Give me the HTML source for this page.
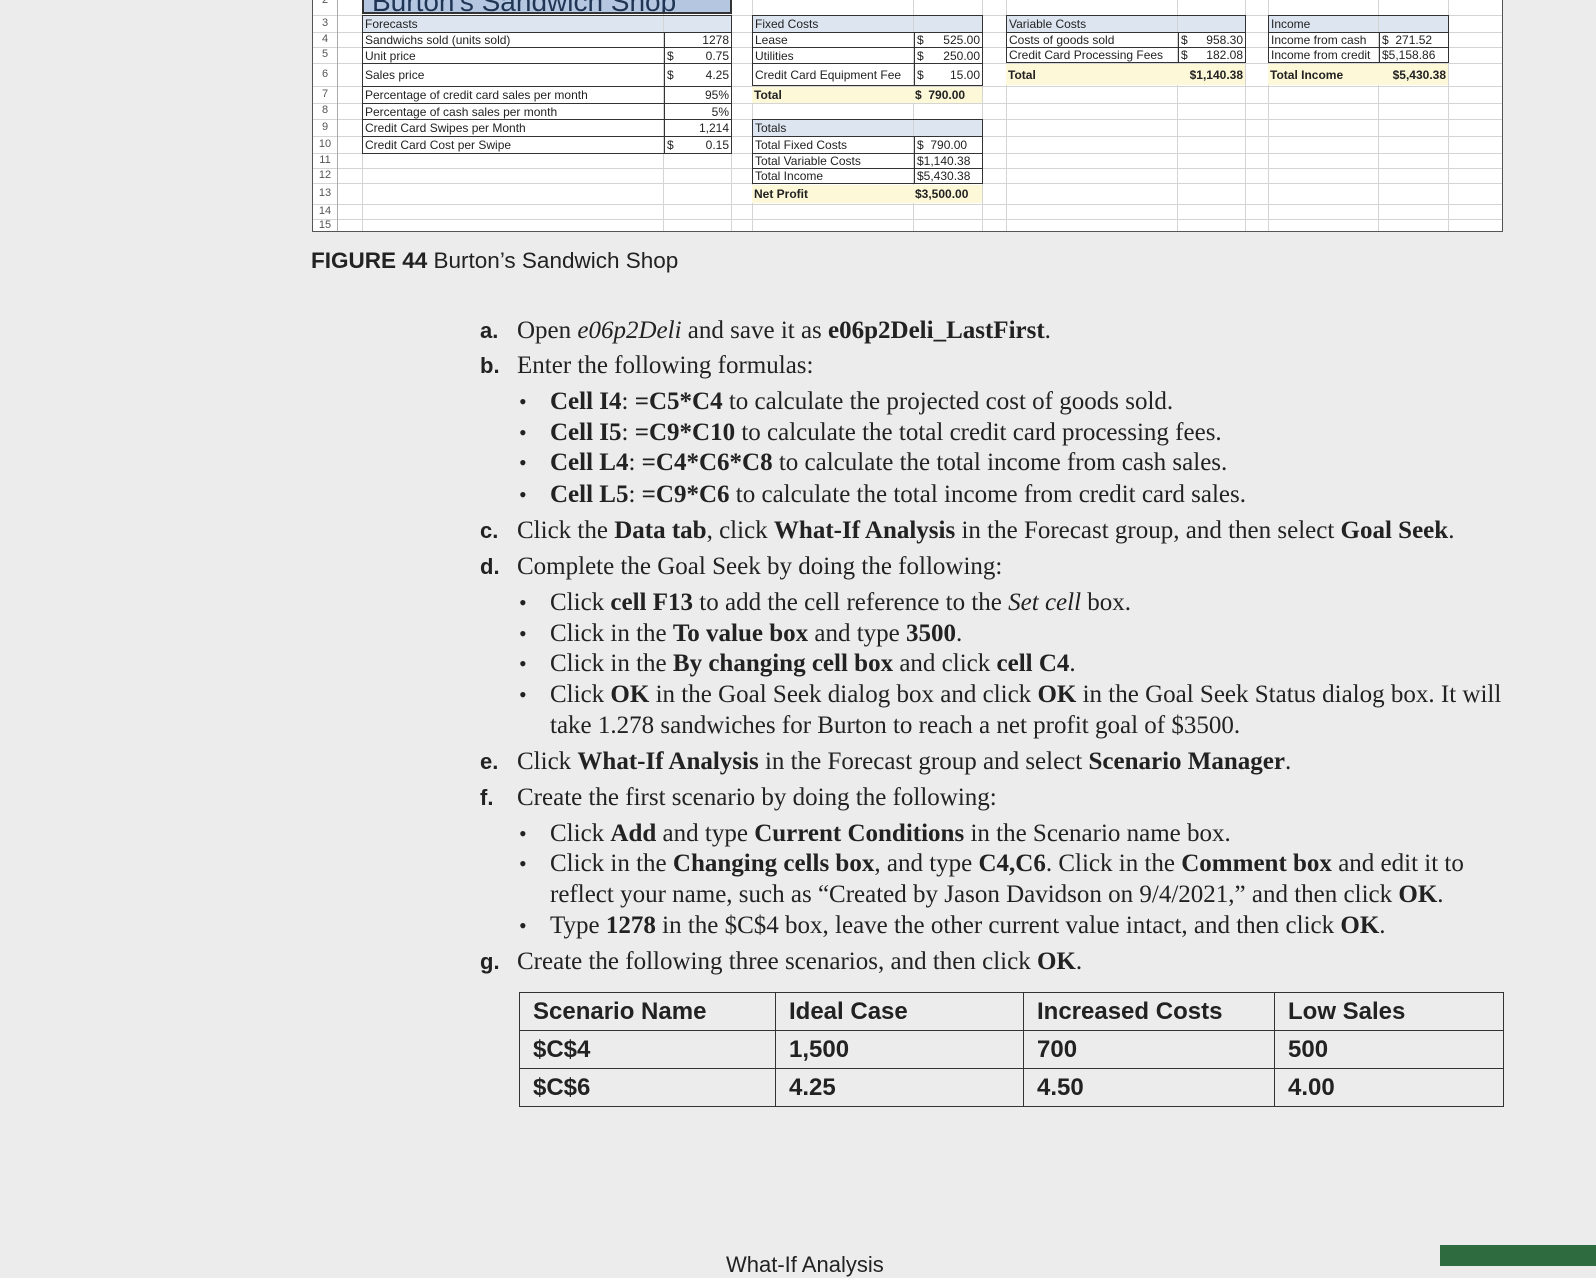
<!DOCTYPE html>
<html><head><meta charset="utf-8"><style>
body{margin:0;width:1596px;height:1266px;background:#ececec;position:relative;overflow:hidden;font-family:"Liberation Serif",serif;}
.a{position:absolute;white-space:nowrap}
.ss{position:absolute;left:312px;top:0;width:1191px;height:232px;background:#fff;border:1px solid #555;border-top:none;box-sizing:border-box;overflow:hidden}
.hl{position:absolute;left:0;right:0;height:1px;background:#d4d4d4}
.vl{position:absolute;top:0;bottom:0;width:1px;background:#d4d4d4}
.c{position:absolute;font-family:"Liberation Sans",sans-serif;font-size:12px;color:#222;white-space:nowrap;overflow:hidden;box-sizing:border-box;padding:0 2px;display:flex;align-items:center}
.r{justify-content:flex-end}
.b{font-weight:bold}
.hd{background:#dde5f0}
.y{background:#fdf8d8}
.bx{position:absolute;border:1.5px solid #333;box-sizing:border-box}
.bt{border-top:1px solid #333}
.rn{position:absolute;left:0;width:24px;font-family:"Liberation Sans",sans-serif;font-size:11px;color:#555;text-align:center}
.L{position:absolute;font-size:25px;color:#222;white-space:nowrap;line-height:30px}
.lt{position:absolute;left:480px;font-family:"Liberation Sans",sans-serif;font-weight:bold;font-size:22px;color:#222;line-height:30px}
.bu{position:absolute;left:519px;font-size:22px;line-height:30px;color:#222}
table.t{position:absolute;left:519px;top:992px;width:985px;border-collapse:collapse;font-family:"Liberation Sans",sans-serif;font-weight:bold;font-size:24px;color:#222}
table.t td{border:1.5px solid #333;height:38px;padding:0 13px;box-sizing:border-box}
</style></head><body>

<div class="ss">
<div class="hl" style="top:15px"></div><div class="hl" style="top:32px"></div><div class="hl" style="top:47px"></div><div class="hl" style="top:63px"></div><div class="hl" style="top:86px"></div><div class="hl" style="top:103px"></div><div class="hl" style="top:119px"></div><div class="hl" style="top:136px"></div><div class="hl" style="top:153px"></div><div class="hl" style="top:168px"></div><div class="hl" style="top:183px"></div><div class="hl" style="top:204px"></div><div class="hl" style="top:219px"></div>
<div class="vl" style="left:24px;background:#aaa"></div><div class="vl" style="left:49px"></div><div class="vl" style="left:350px"></div><div class="vl" style="left:418px"></div><div class="vl" style="left:439px"></div><div class="vl" style="left:600px"></div><div class="vl" style="left:669px"></div><div class="vl" style="left:693px"></div><div class="vl" style="left:864px"></div><div class="vl" style="left:932px"></div><div class="vl" style="left:955px"></div><div class="vl" style="left:1065px"></div><div class="vl" style="left:1135px"></div>
<div class="rn" style="top:-6px">2</div><div class="rn" style="top:17px">3</div><div class="rn" style="top:33px">4</div><div class="rn" style="top:48px">5</div><div class="rn" style="top:68px">6</div><div class="rn" style="top:88px">7</div><div class="rn" style="top:104px">8</div><div class="rn" style="top:121px">9</div><div class="rn" style="top:138px">10</div><div class="rn" style="top:154px">11</div><div class="rn" style="top:169px">12</div><div class="rn" style="top:187px">13</div><div class="rn" style="top:205px">14</div><div class="rn" style="top:219px">15</div>
<div class="c" style="left:49px;top:-14px;width:370px;height:28px;background:#b4c6e0;border:2px solid #333;font-size:28px;color:#1f3553;padding-left:8px;align-items:flex-end"><span style="margin-bottom:-4px;line-height:28px">Burton's Sandwich Shop</span></div>
<div class="bx" style="left:49px;top:15px;width:370px;height:139px"></div>
<div class="c hd" style="left:50px;top:16px;width:300px;height:16px">Forecasts</div><div class="c hd" style="left:351px;top:16px;width:67px;height:16px"></div>
<div class="c bt" style="left:50px;top:32px;width:301px;height:15px">Sandwichs sold (units sold)</div><div class="c r bt" style="left:351px;top:32px;width:67px;height:15px;border-left:1px solid #333">1278</div>
<div class="c bt" style="left:50px;top:47px;width:301px;height:16px">Unit price</div><div class="c bt" style="left:351px;top:47px;width:67px;height:16px;border-left:1px solid #333;justify-content:space-between"><span>$</span><span>0.75</span></div>
<div class="c bt" style="left:50px;top:63px;width:301px;height:23px">Sales price</div><div class="c bt" style="left:351px;top:63px;width:67px;height:23px;border-left:1px solid #333;justify-content:space-between"><span>$</span><span>4.25</span></div>
<div class="c bt" style="left:50px;top:86px;width:301px;height:17px">Percentage of credit card sales per month</div><div class="c r bt" style="left:351px;top:86px;width:67px;height:17px;border-left:1px solid #333">95%</div>
<div class="c bt" style="left:50px;top:103px;width:301px;height:16px">Percentage of cash sales per month</div><div class="c r bt" style="left:351px;top:103px;width:67px;height:16px;border-left:1px solid #333">5%</div>
<div class="c bt" style="left:50px;top:119px;width:301px;height:17px">Credit Card Swipes per Month</div><div class="c r bt" style="left:351px;top:119px;width:67px;height:17px;border-left:1px solid #333">1,214</div>
<div class="c bt" style="left:50px;top:136px;width:301px;height:17px">Credit Card Cost per Swipe</div><div class="c bt" style="left:351px;top:136px;width:67px;height:17px;border-left:1px solid #333;justify-content:space-between"><span>$</span><span>0.15</span></div>
<div class="bx" style="left:439px;top:15px;width:231px;height:71px"></div>
<div class="c hd" style="left:440px;top:16px;width:160px;height:16px">Fixed Costs</div><div class="c hd" style="left:601px;top:16px;width:68px;height:16px"></div>
<div class="c bt" style="left:440px;top:32px;width:161px;height:15px">Lease</div><div class="c bt" style="left:601px;top:32px;width:68px;height:15px;border-left:1px solid #333;justify-content:space-between"><span>$</span><span>525.00</span></div>
<div class="c bt" style="left:440px;top:47px;width:161px;height:16px">Utilities</div><div class="c bt" style="left:601px;top:47px;width:68px;height:16px;border-left:1px solid #333;justify-content:space-between"><span>$</span><span>250.00</span></div>
<div class="c bt" style="left:440px;top:63px;width:161px;height:23px">Credit Card Equipment Fee</div><div class="c bt" style="left:601px;top:63px;width:68px;height:23px;border-left:1px solid #333;justify-content:space-between"><span>$</span><span>15.00</span></div>
<div class="c y b" style="left:439px;top:87px;width:161px;height:16px">Total</div><div class="c y b" style="left:600px;top:87px;width:69px;height:16px">$&nbsp; 790.00</div>
<div class="bx" style="left:439px;top:119px;width:231px;height:65px"></div>
<div class="c hd" style="left:440px;top:120px;width:160px;height:16px">Totals</div><div class="c hd" style="left:601px;top:120px;width:68px;height:16px"></div>
<div class="c bt" style="left:440px;top:136px;width:161px;height:17px">Total Fixed Costs</div><div class="c bt" style="left:601px;top:136px;width:68px;height:17px;border-left:1px solid #333">$&nbsp; 790.00</div>
<div class="c bt" style="left:440px;top:153px;width:161px;height:15px">Total Variable Costs</div><div class="c bt" style="left:601px;top:153px;width:68px;height:15px;border-left:1px solid #333">$1,140.38</div>
<div class="c bt" style="left:440px;top:168px;width:161px;height:15px">Total Income</div><div class="c bt" style="left:601px;top:168px;width:68px;height:15px;border-left:1px solid #333">$5,430.38</div>
<div class="c y b" style="left:439px;top:185px;width:161px;height:18px">Net Profit</div><div class="c y b" style="left:600px;top:185px;width:69px;height:18px">$3,500.00</div>
<div class="bx" style="left:693px;top:15px;width:240px;height:48px"></div>
<div class="c hd" style="left:694px;top:16px;width:170px;height:16px">Variable Costs</div><div class="c hd" style="left:865px;top:16px;width:67px;height:16px"></div>
<div class="c bt" style="left:694px;top:32px;width:171px;height:15px">Costs of goods sold</div><div class="c bt" style="left:865px;top:32px;width:67px;height:15px;border-left:1px solid #333;justify-content:space-between"><span>$</span><span>958.30</span></div>
<div class="c bt" style="left:694px;top:47px;width:171px;height:15px">Credit Card Processing Fees</div><div class="c bt" style="left:865px;top:47px;width:67px;height:15px;border-left:1px solid #333;justify-content:space-between"><span>$</span><span>182.08</span></div>
<div class="c y b" style="left:693px;top:64px;width:171px;height:21px">Total</div><div class="c y b r" style="left:864px;top:64px;width:68px;height:21px">$1,140.38</div>
<div class="bx" style="left:955px;top:15px;width:181px;height:48px"></div>
<div class="c hd" style="left:956px;top:16px;width:109px;height:16px">Income</div><div class="c hd" style="left:1066px;top:16px;width:69px;height:16px"></div>
<div class="c bt" style="left:956px;top:32px;width:110px;height:15px">Income from cash</div><div class="c bt" style="left:1066px;top:32px;width:69px;height:15px;border-left:1px solid #333">$&nbsp; 271.52</div>
<div class="c bt" style="left:956px;top:47px;width:110px;height:15px">Income from credit</div><div class="c bt" style="left:1066px;top:47px;width:69px;height:15px;border-left:1px solid #333">$5,158.86</div>
<div class="c y b" style="left:955px;top:64px;width:111px;height:21px">Total Income</div><div class="c y b r" style="left:1066px;top:64px;width:69px;height:21px">$5,430.38</div>
</div>

<div class="a" style="left:311px;top:248px;font-family:'Liberation Sans',sans-serif;font-size:22.5px;color:#222"><b>FIGURE 44</b> Burton’s Sandwich Shop</div>

<div class="lt" style="top:316px">a.</div><div class="L" style="left:517px;top:316px">Open <i>e06p2Deli</i> and save it as <b>e06p2Deli_LastFirst</b>.</div>
<div class="lt" style="top:351px">b.</div><div class="L" style="left:517px;top:351px">Enter the following formulas:</div>
<div class="bu" style="top:387px">•</div><div class="L" style="left:550px;top:387px"><b>Cell I4</b>: <b>=C5*C4</b> to calculate the projected cost of goods sold.</div>
<div class="bu" style="top:418px">•</div><div class="L" style="left:550px;top:418px"><b>Cell I5</b>: <b>=C9*C10</b> to calculate the total credit card processing fees.</div>
<div class="bu" style="top:448px">•</div><div class="L" style="left:550px;top:448px"><b>Cell L4</b>: <b>=C4*C6*C8</b> to calculate the total income from cash sales.</div>
<div class="bu" style="top:480px">•</div><div class="L" style="left:550px;top:480px"><b>Cell L5</b>: <b>=C9*C6</b> to calculate the total income from credit card sales.</div>
<div class="lt" style="top:516px">c.</div><div class="L" style="left:517px;top:516px">Click the <b>Data tab</b>, click <b>What-If Analysis</b> in the Forecast group, and then select <b>Goal Seek</b>.</div>
<div class="lt" style="top:552px">d.</div><div class="L" style="left:517px;top:552px">Complete the Goal Seek by doing the following:</div>
<div class="bu" style="top:588px">•</div><div class="L" style="left:550px;top:588px">Click <b>cell F13</b> to add the cell reference to the <i>Set cell</i> box.</div>
<div class="bu" style="top:619px">•</div><div class="L" style="left:550px;top:619px">Click in the <b>To value box</b> and type <b>3500</b>.</div>
<div class="bu" style="top:649px">•</div><div class="L" style="left:550px;top:649px">Click in the <b>By changing cell box</b> and click <b>cell C4</b>.</div>
<div class="bu" style="top:680px">•</div><div class="L" style="left:550px;top:680px">Click <b>OK</b> in the Goal Seek dialog box and click <b>OK</b> in the Goal Seek Status dialog box. It will</div>
<div class="L" style="left:550px;top:711px">take 1.278 sandwiches for Burton to reach a net profit goal of $3500.</div>
<div class="lt" style="top:747px">e.</div><div class="L" style="left:517px;top:747px">Click <b>What-If Analysis</b> in the Forecast group and select <b>Scenario Manager</b>.</div>
<div class="lt" style="top:783px">f.</div><div class="L" style="left:517px;top:783px">Create the first scenario by doing the following:</div>
<div class="bu" style="top:819px">•</div><div class="L" style="left:550px;top:819px">Click <b>Add</b> and type <b>Current Conditions</b> in the Scenario name box.</div>
<div class="bu" style="top:849px">•</div><div class="L" style="left:550px;top:849px">Click in the <b>Changing cells box</b>, and type <b>C4,C6</b>. Click in the <b>Comment box</b> and edit it to</div>
<div class="L" style="left:550px;top:880px">reflect your name, such as “Created by Jason Davidson on 9/4/2021,” and then click <b>OK</b>.</div>
<div class="bu" style="top:911px">•</div><div class="L" style="left:550px;top:911px">Type <b>1278</b> in the $C$4 box, leave the other current value intact, and then click <b>OK</b>.</div>
<div class="lt" style="top:947px">g.</div><div class="L" style="left:517px;top:947px">Create the following three scenarios, and then click <b>OK</b>.</div>

<table class="t">
<tr><td style="width:256px">Scenario Name</td><td style="width:248px">Ideal Case</td><td style="width:251px">Increased Costs</td><td>Low Sales</td></tr>
<tr><td>$C$4</td><td>1,500</td><td>700</td><td>500</td></tr>
<tr><td>$C$6</td><td>4.25</td><td>4.50</td><td>4.00</td></tr>
</table>

<div class="a" style="left:726px;top:1252px;font-family:'Liberation Sans',sans-serif;font-size:22px;color:#222">What-If Analysis</div>
<div class="a" style="left:1440px;top:1245px;width:156px;height:21px;background:#2e6b3e"></div>
</body></html>
